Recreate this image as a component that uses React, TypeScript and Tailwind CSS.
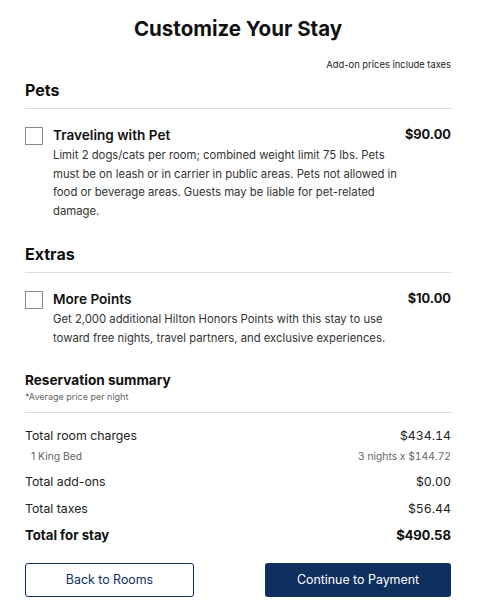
import { useState } from "react";

type AddOn = {
  id: string;
  title: string;
  price: string;
  description: string;
};

const sections: { heading: string; items: AddOn[] }[] = [
  {
    heading: "Pets",
    items: [
      {
        id: "pet",
        title: "Traveling with Pet",
        price: "$90.00",
        description:
          "Limit 2 dogs/cats per room; combined weight limit 75 lbs. Pets must be on leash or in carrier in public areas. Pets not allowed in food or beverage areas. Guests may be liable for pet-related damage.",
      },
    ],
  },
  {
    heading: "Extras",
    items: [
      {
        id: "points",
        title: "More Points",
        price: "$10.00",
        description:
          "Get 2,000 additional Hilton Honors Points with this stay to use toward free nights, travel partners, and exclusive experiences.",
      },
    ],
  },
];

function AddOnRow({ item }: { item: AddOn }) {
  const [checked, setChecked] = useState(false);
  return (
    <div className="flex items-start gap-[10px]">
      <button
        onClick={() => setChecked(!checked)}
        aria-label={item.title}
        className="mt-[2px] h-[18px] w-[18px] shrink-0 border border-[#8a8a8a] bg-white"
      >
        {checked && (
          <svg viewBox="0 0 16 16" className="h-full w-full text-[#0f2f5f]">
            <path d="M3 8.5l3 3 7-7" fill="none" stroke="currentColor" strokeWidth="2" />
          </svg>
        )}
      </button>
      <div className="flex-1">
        <div className="flex items-start justify-between">
          <span className="text-[13.6px] font-semibold leading-[20px] text-[#111]">{item.title}</span>
          <span className="text-[12.8px] font-bold leading-[20px] text-[#111]">{item.price}</span>
        </div>
        <p className="mt-[1px] max-w-[346px] text-[11.3px] leading-[18.5px] text-[#333]">
          {item.description}
        </p>
      </div>
    </div>
  );
}

function SummaryRow({
  label,
  value,
  bold,
}: {
  label: string;
  value: string;
  bold?: boolean;
}) {
  return (
    <div
      className={
        bold
          ? "flex justify-between text-[13.2px] font-bold leading-[18px] text-[#111]"
          : "flex justify-between text-[12.3px] leading-[18px] text-[#222]"
      }
    >
      <span>{label}</span>
      <span className="tabular-nums">{value}</span>
    </div>
  );
}

export default function App() {
  return (
    <div
      className="min-h-[613px] w-full bg-white pl-[25px] pr-[27px] pt-[15px]"
      style={{ fontFamily: "Inter, 'Noto Sans', sans-serif" }}
    >
      <h1 className="text-center text-[20.5px] font-bold leading-[28px] text-[#111]">
        Customize Your Stay
      </h1>
      <p className="mt-[15px] text-right text-[9.4px] leading-[14px] text-[#222]">
        Add-on prices include taxes
      </p>

      {sections.map((section) => (
        <section key={section.heading} className="mt-[7px]">
          <h2 className="border-b border-[#dcdcdc] pb-[7px] text-[16px] font-bold leading-[22px] text-[#111]">
            {section.heading}
          </h2>
          <div className="pb-[16px] pt-[16px]">
            {section.items.map((item) => (
              <AddOnRow key={item.id} item={item} />
            ))}
          </div>
        </section>
      ))}

      <section className="mt-[7px]">
        <h3 className="text-[13.6px] font-bold leading-[20px] text-[#111]">Reservation summary</h3>
        <p className="text-[9px] leading-[14px] text-[#666]">*Average price per night</p>
        <div className="mt-[8px] border-t border-[#dcdcdc] pt-[14px]">
          <SummaryRow label="Total room charges" value="$434.14" />
          <div className="mt-[3px] flex justify-between pl-[6px] text-[10.3px] leading-[16px] text-[#666]">
            <span>1 King Bed</span>
            <span className="tabular-nums">3 nights x $144.72</span>
          </div>
          <div className="mt-[9px]">
            <SummaryRow label="Total add-ons" value="$0.00" />
          </div>
          <div className="mt-[9px]">
            <SummaryRow label="Total taxes" value="$56.44" />
          </div>
          <div className="mt-[8px]">
            <SummaryRow label="Total for stay" value="$490.58" bold />
          </div>
        </div>
      </section>

      <div className="mt-[19px] flex justify-between">
        <button className="h-[34px] w-[169px] rounded-[3px] border border-[#0f2f5f] bg-white text-[12.4px] text-[#0f2f5f]">
          Back to Rooms
        </button>
        <button className="h-[34px] w-[186px] rounded-[3px] bg-[#0f2f5f] text-[12.4px] text-white">
          Continue to Payment
        </button>
      </div>
    </div>
  );
}
